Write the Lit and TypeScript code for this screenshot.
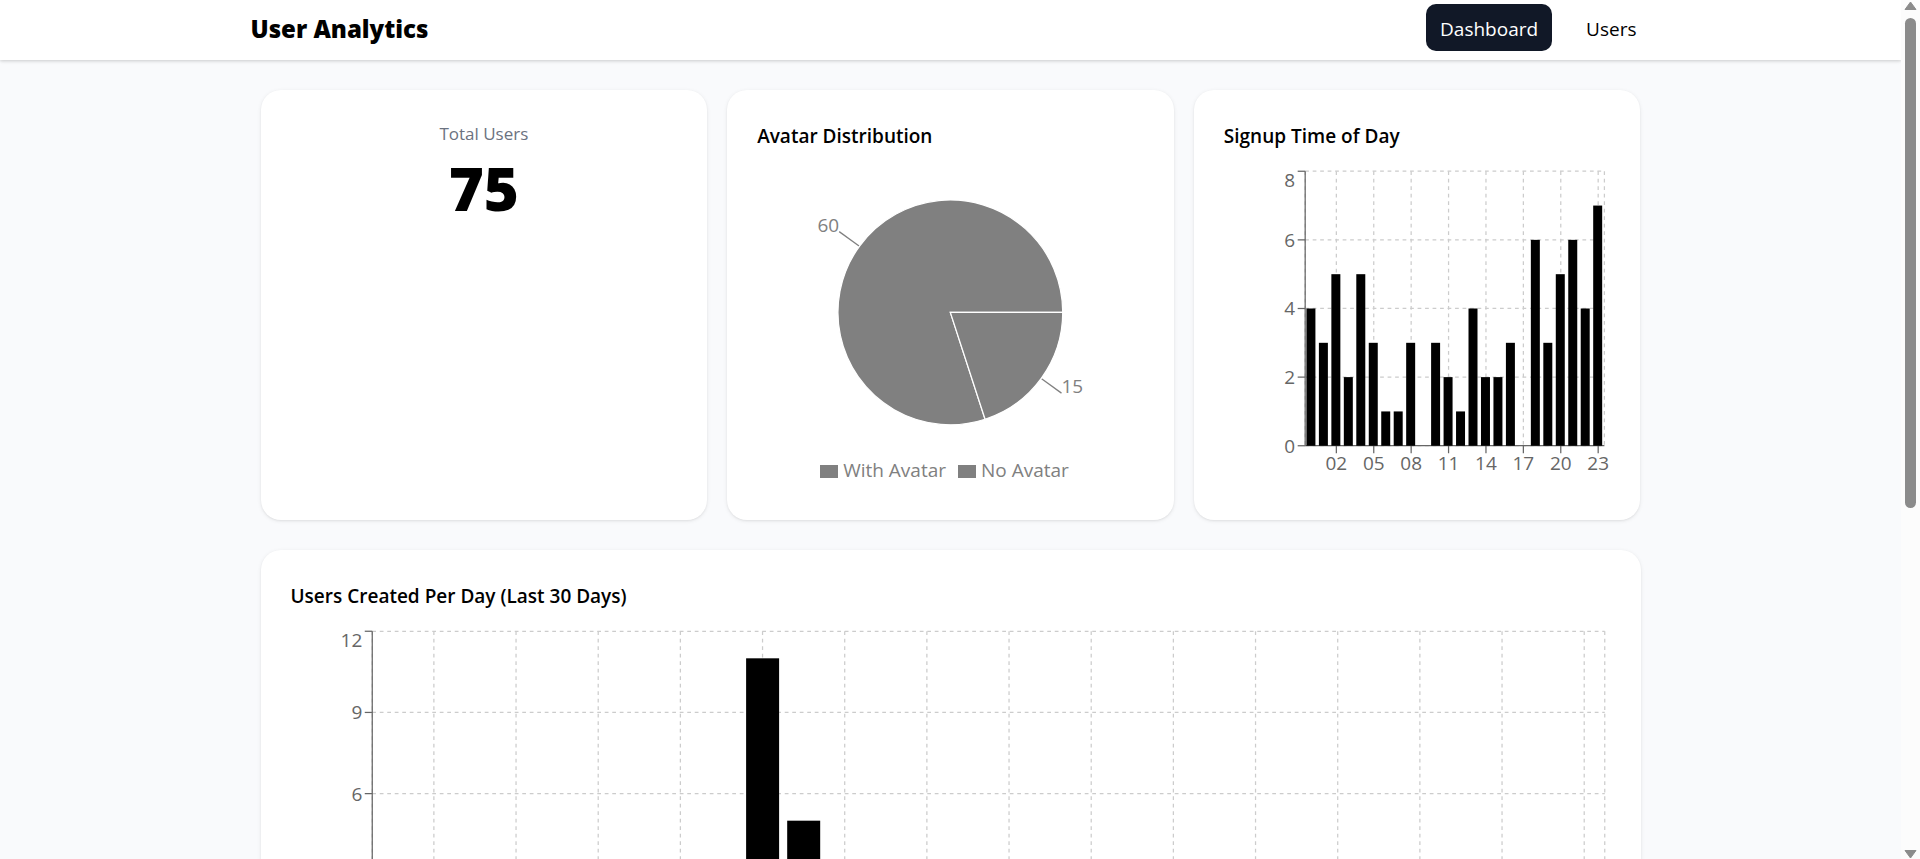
import { LitElement, html, svg, css } from "lit";
import { customElement, property, state } from "lit/decorators.js";
import { classMap } from "lit/directives/class-map.js";

const HOURS = [4, 3, 5, 2, 5, 3, 1, 1, 3, 0, 3, 2, 1, 4, 2, 2, 3, 0, 6, 3, 5, 6, 4, 7];
const DAYS = Array.from({ length: 30 }, (_, i) => (i === 9 ? 11 : i === 10 ? 5 : 0));

interface Bar {
  label: string;
  value: number;
}

@customElement("bar-chart")
export class BarChart extends LitElement {
  @property({ attribute: false }) bars: Bar[] = [];
  @property({ attribute: false }) ticks: number[] = [];
  @property({ attribute: false }) every: number[] = [];
  @property({ type: Number }) width = 387;
  @property({ type: Number }) height = 312;
  @property({ type: Number }) foot = 31;
  @property({ type: Number, attribute: "bar-width" }) barWidth = 9;
  @property() name = "";

  static styles = css`
    :host {
      display: block;
    }
    svg {
      display: block;
      width: 100%;
      height: auto;
      overflow: visible;
    }
    .grid {
      stroke: #ccc;
      stroke-width: 1.25;
      stroke-dasharray: 3.75 3.75;
    }
    .axis {
      stroke: #666;
      stroke-width: 1.25;
    }
    text {
      font-family: "Open Sans", "Noto Sans", sans-serif;
      font-size: 19px;
      fill: #666;
    }
    .y {
      text-anchor: end;
    }
    .x {
      text-anchor: middle;
    }
  `;

  render() {
    const left = 81.25;
    const top = 6.25;
    const right = this.width - 6.25;
    const bottom = this.height - this.foot;
    const max = Math.max(...this.ticks);
    const band = (right - left) / this.bars.length;
    const y = (v: number) => bottom - ((bottom - top) * v) / max;
    const mid = (i: number) => left + band * (i + 0.5);
    return html`<svg viewBox="0 0 ${this.width} ${this.height}" role="img" aria-label=${this.name}>
      ${this.ticks.map((t) => svg`<line class="grid" x1=${left} x2=${right} y1=${y(t)} y2=${y(t)} />`)}
      ${[left, ...this.every.map(mid), right].map(
        (x) => svg`<line class="grid" x1=${x} x2=${x} y1=${top} y2=${bottom} />`
      )}
      <line class="axis" x1=${left} x2=${right} y1=${bottom} y2=${bottom} />
      ${this.every.map(
        (i) => svg`<line class="axis" x1=${mid(i)} x2=${mid(i)} y1=${bottom} y2=${bottom + 7.5} />
          <text class="x" x=${mid(i)} y=${bottom + 24}>${this.bars[i].label}</text>`
      )}
      <line class="axis" x1=${left} x2=${left} y1=${top} y2=${bottom} />
      ${this.ticks.map(
        (t) => svg`<line class="axis" x1=${left - 7.5} x2=${left} y1=${y(t)} y2=${y(t)} />
          <text class="y" x=${left - 10} y=${Math.max(y(t) + 7, 22)}>${t}</text>`
      )}
      ${this.bars.map(
        (b, i) => svg`<rect x=${left + band * (i + 0.1)} y=${y(b.value)} width=${this.barWidth} height=${bottom - y(b.value)} />`
      )}
    </svg>`;
  }
}

@customElement("avatar-pie")
export class AvatarPie extends LitElement {
  static styles = css`
    :host {
      display: block;
      font-family: "Open Sans", "Noto Sans", sans-serif;
      font-size: 19px;
      color: #808080;
    }
    svg {
      display: block;
      width: 100%;
      height: auto;
    }
    .slice {
      fill: #808080;
      stroke: #fff;
      stroke-width: 1.25;
    }
    .lead {
      stroke: #808080;
      stroke-width: 1.25;
    }
    text {
      fill: #808080;
    }
    .end {
      text-anchor: end;
    }
    ul {
      display: flex;
      justify-content: center;
      list-style: none;
      margin: 0;
      padding: 0 0 6px;
      line-height: 28px;
    }
    li {
      display: flex;
      align-items: center;
      gap: 5px;
      margin-right: 12px;
    }
    .swatch {
      width: 18px;
      height: 13px;
      margin-top: 3px;
      background: #808080;
    }
  `;

  render() {
    const cx = 193.5;
    const cy = 147.5;
    const at = (deg: number, r: number) => {
      const a = (deg * Math.PI) / 180;
      return { x: cx + r * Math.cos(a), y: cy - r * Math.sin(a) };
    };
    const r = 112.5;
    const split = at(-72, r);
    const a1 = at(144, r);
    const a2 = at(144, 137.5);
    const b1 = at(-36, r);
    const b2 = at(-36, 137.5);
    return html`<svg viewBox="0 0 387 291" role="img" aria-label="Avatar distribution">
        <line class="lead" x1=${a1.x} y1=${a1.y} x2=${a2.x} y2=${a2.y} />
        <line class="lead" x1=${b1.x} y1=${b1.y} x2=${b2.x} y2=${b2.y} />
        <path class="slice" d="M${cx} ${cy}L${cx + r} ${cy}A${r} ${r} 0 1 0 ${split.x} ${split.y}Z" />
        <path class="slice" d="M${cx} ${cy}L${split.x} ${split.y}A${r} ${r} 0 0 0 ${cx + r} ${cy}Z" />
        <text class="end" x=${a2.x} y=${a2.y}>60</text>
        <text x=${b2.x} y=${b2.y}>15</text>
      </svg>
      <ul>
        <li><span class="swatch"></span>With Avatar</li>
        <li><span class="swatch"></span>No Avatar</li>
      </ul>`;
  }
}

@customElement("app-root")
export class AppRoot extends LitElement {
  @state() private page = "Dashboard";

  static styles = css`
    :host {
      display: grid;
      grid-template-columns: minmax(0, 1fr) 19px;
      height: 100vh;
      font-family: "Open Sans", "Noto Sans", sans-serif;
      font-size: 19px;
      color: #000;
      background: #f9fafc;
    }
    .page {
      overflow-y: auto;
      scrollbar-width: none;
    }
    header {
      background: #fff;
      box-shadow: 0 1px 4px rgba(0, 0, 0, 0.1), 0 1px 3px rgba(0, 0, 0, 0.1);
    }
    .bar {
      box-sizing: border-box;
      max-width: 1440px;
      height: 60px;
      margin: 0 auto;
      padding: 4px 20px 0;
      display: flex;
      justify-content: space-between;
      align-items: flex-start;
    }
    h1 {
      margin: 0;
      padding-top: 8px;
      font-size: 24px;
      line-height: 34px;
      font-weight: 800;
    }
    nav {
      display: flex;
      gap: 20px;
    }
    nav a {
      padding: 11px 14px 8px;
      border-radius: 10px;
      line-height: 28px;
      color: inherit;
      text-decoration: none;
    }
    nav a.active {
      background: #111827;
      color: #fff;
    }
    main {
      box-sizing: border-box;
      max-width: 1440px;
      margin: 0 auto;
      padding: 30px;
      display: grid;
      gap: 30px;
    }
    .row {
      display: grid;
      grid-template-columns: repeat(3, minmax(0, 1fr));
      gap: 20px;
    }
    .card {
      background: #fff;
      border-radius: 20px;
      padding: 30px;
      box-shadow: 0 1px 4px rgba(0, 0, 0, 0.08), 0 1px 2px rgba(0, 0, 0, 0.05);
    }
    h2 {
      margin: 0 0 12px;
      font-size: 19px;
      line-height: 33px;
      font-weight: 600;
    }
    .total {
      text-align: center;
    }
    .total h2 {
      margin: 0;
      font-size: 17px;
      line-height: 28px;
      font-weight: 500;
      color: #6b7280;
    }
    .total p {
      margin: 0;
      padding-top: 3px;
      font-size: 60px;
      line-height: 75px;
      font-weight: 800;
    }
    .scroll {
      display: flex;
      flex-direction: column;
      align-items: center;
      background: #fcfcfc;
    }
    .scroll svg {
      display: block;
      flex: none;
      width: 19px;
      height: 18px;
      fill: #8b8b8b;
    }
    .track {
      flex: 1;
    }
    .thumb {
      width: 11px;
      height: 59.5%;
      border-radius: 6px;
      background: #8b8b8b;
    }
  `;

  private go(e: Event, name: string) {
    e.preventDefault();
    this.page = name;
  }

  render() {
    return html`
      <div class="page">
        <header>
          <div class="bar">
            <h1>User Analytics</h1>
            <nav>
              ${["Dashboard", "Users"].map(
                (n) => html`<a
                  href="#${n.toLowerCase()}"
                  class=${classMap({ active: this.page === n })}
                  @click=${(e: Event) => this.go(e, n)}
                  >${n}</a
                >`
              )}
            </nav>
          </div>
        </header>
        <main>
          <div class="row">
            <section class="card total">
              <h2>Total Users</h2>
              <p>75</p>
            </section>
            <section class="card">
              <h2>Avatar Distribution</h2>
              <avatar-pie></avatar-pie>
            </section>
            <section class="card">
              <h2>Signup Time of Day</h2>
              <bar-chart
                name="Signups by hour"
                .bars=${HOURS.map((value, i) => ({ value, label: String(i).padStart(2, "0") }))}
                .ticks=${[0, 2, 4, 6, 8]}
                .every=${[2, 5, 8, 11, 14, 17, 20, 23]}
              ></bar-chart>
            </section>
          </div>
          <section class="card">
            <h2>Users Created Per Day (Last 30 Days)</h2>
            <bar-chart
              name="Users created per day"
              width="1320"
              height="375"
              foot="44"
              bar-width="33"
              .bars=${DAYS.map((value) => ({ value, label: "" }))}
              .ticks=${[0, 3, 6, 9, 12]}
              .every=${DAYS.map((_, i) => i).filter((i) => i % 2)}
            ></bar-chart>
          </section>
        </main>
      </div>
      <div class="scroll" aria-hidden="true">
        <svg viewBox="0 0 19 18"><path d="M9.5 2L15 9.500H4Z" stroke="#8b8b8b" stroke-linejoin="round" /></svg>
        <div class="track"><div class="thumb"></div></div>
        <svg viewBox="0 0 19 18"><path d="M9.5 17L15 9.500H4Z" stroke="#8b8b8b" stroke-linejoin="round" /></svg>
      </div>
    `;
  }
}
